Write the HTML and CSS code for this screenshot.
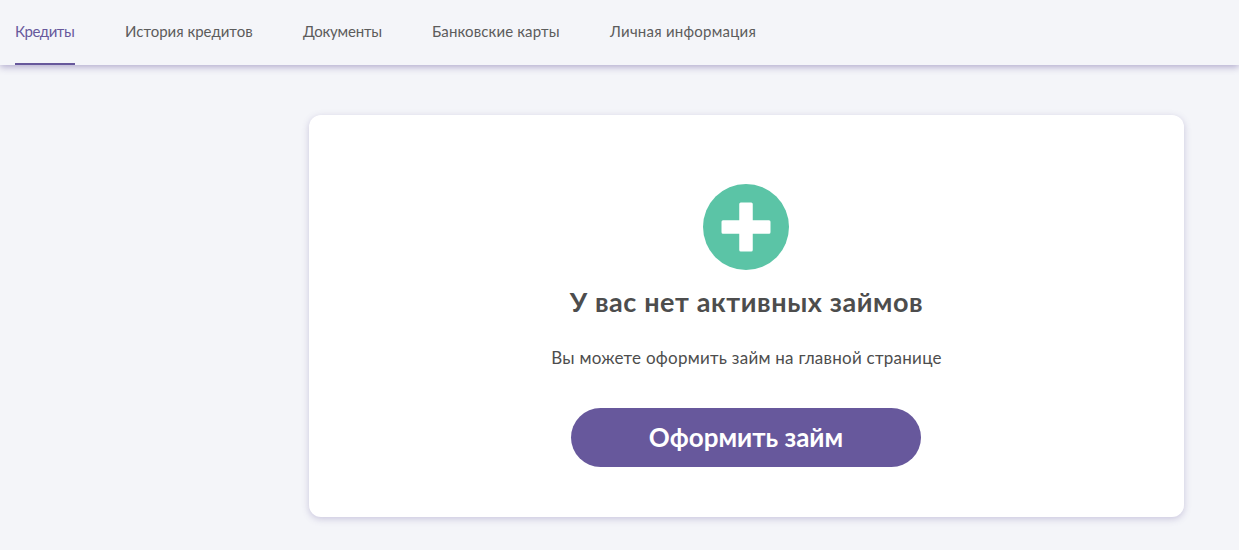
FILE: index.html
```html
<!DOCTYPE html>
<html lang="ru">
<head>
<meta charset="utf-8">
<title>Кредиты</title>
<link rel="stylesheet" href="styles.css">
</head>
<body>
<nav class="tabs">
  <a class="tab tab-active tab-1">Кредиты</a>
  <a class="tab tab-2">История кредитов</a>
  <a class="tab tab-3">Документы</a>
  <a class="tab tab-4">Банковские карты</a>
  <a class="tab tab-5">Личная информация</a>
</nav>
<main class="layout">
  <aside class="side"></aside>
  <section class="card">
    <svg class="plus" width="86" height="86" viewBox="0 0 86 86">
      <circle cx="43" cy="43" r="43" fill="#5bc4a6"/>
      <path d="M36.250 20a1.500 1.500 0 0 1 1.500-1.500h10.500a1.500 1.500 0 0 1 1.500 1.500v16.250h16.250a1.500 1.500 0 0 1 1.500 1.500v10.500a1.500 1.500 0 0 1-1.500 1.500h-16.250v16.250a1.500 1.500 0 0 1-1.500 1.500h-10.500a1.500 1.500 0 0 1-1.500-1.500v-16.250h-16.250a1.500 1.500 0 0 1-1.500-1.500v-10.500a1.500 1.500 0 0 1 1.500-1.500h16.250z" fill="#fff"/>
    </svg>
    <h1 class="title">У вас нет активных займов</h1>
    <p class="text">Вы можете оформить займ на главной странице</p>
    <a class="btn">Оформить займ</a>
  </section>
</main>
</body>
</html>
```
FILE: styles.css
```css
* { box-sizing: border-box; }
html, body { margin: 0; height: 100%; }
body {
  background: #f4f5f9;
  font-family: "Lato", "Open Sans", "Liberation Sans", sans-serif;
  color: #4d4d4d;
  overflow: hidden;
}
.tabs {
  display: flex;
  gap: 50px;
  height: 65px;
  padding-left: 15px;
  background: #f4f5f9;
  box-shadow: 0 2px 7px rgba(103, 88, 156, 0.48);
}
.tab {
  height: 65px;
  padding-top: 21px;
  font-size: 15px;
  line-height: 20px;
  white-space: nowrap;
  color: #5c5c5c;
}
.tab-active {
  color: #67589c;
  border-bottom: 2px solid #67589c;
}
.tab-1 { width: 60px; letter-spacing: -0.45px; }
.tab-2 { width: 128px; }
.tab-3 { width: 79px; letter-spacing: -0.2px; }
.tab-4 { width: 128px; letter-spacing: 0.12px; }
.tab-5 { width: 146px; letter-spacing: 0.24px; }
.layout {
  display: flex;
  padding: 50px 55px 0 309px;
}
.side { flex: none; }
.card {
  flex: 1;
  height: 402px;
  background: #fff;
  border-radius: 12px;
  box-shadow: 0 2px 7px rgba(103, 88, 156, 0.3);
  display: flex;
  flex-direction: column;
  align-items: center;
  padding-top: 69px;
}
.plus { display: block; flex: none; margin-right: 1px; }
.title {
  margin: 16px 0 0;
  font-size: 27px;
  line-height: 32px;
  font-weight: 700;
  color: #4d4d4d;
  letter-spacing: 0.6px;
}
.text {
  margin: 29px 0 0;
  font-size: 17px;
  line-height: 22px;
  color: #4d4d4d;
  letter-spacing: 0.25px;
}
.btn {
  margin: 39px 1px 0 0;
  width: 350px;
  height: 59px;
  border-radius: 30px;
  background: #67589c;
  color: #fff;
  font-size: 26px;
  font-weight: 700;
  line-height: 59px;
  text-align: center;
}
```
